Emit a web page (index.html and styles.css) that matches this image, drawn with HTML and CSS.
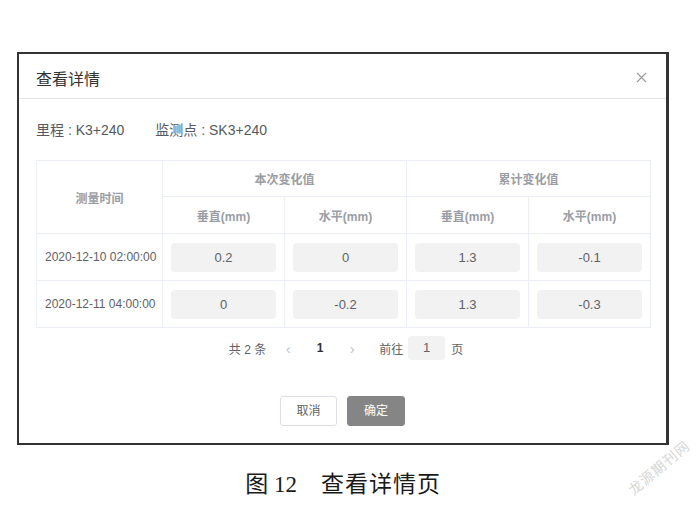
FILE: index.html
```html
<!DOCTYPE html>
<html>
<head>
<title>查看详情</title>
<meta http-equiv="content-type" content="text/html;charset=utf-8" />
<link rel="stylesheet" href="styles.css">
</head>
<body>

<div class="page">

<div class="frame">
	<div class="dlghead">
		<span class="dlgtitle">查看详情</span>
		<svg class="closeicon" width="11" height="11" viewBox="0 0 11 11">
			<path d="M1 1 L10 10 M10 1 L1 10" stroke="#9a9a9a" stroke-width="1.1" fill="none" />
		</svg>
	</div>

	<div class="dlgbody">
		<div class="info">
			<span class="infoitem">里程 : K3+240</span>
			<span class="infoitem">监测点 : SK3+240</span>
		</div>

		<table class="datatable">
			<colgroup>
				<col class="col_time" />
				<col class="col_val" />
				<col class="col_val" />
				<col class="col_val" />
				<col class="col_val" />
			</colgroup>
			<thead>
				<tr class="head1">
					<th rowspan="2">测量时间</th>
					<th colspan="2">本次变化值</th>
					<th colspan="2">累计变化值</th>
				</tr>
				<tr class="head2">
					<th>垂直(mm)</th>
					<th>水平(mm)</th>
					<th>垂直(mm)</th>
					<th>水平(mm)</th>
				</tr>
			</thead>
			<tbody>
				<tr>
					<td class="timecell">2020-12-10 02:00:00</td>
					<td><div class="valbox">0.2</div></td>
					<td><div class="valbox">0</div></td>
					<td><div class="valbox">1.3</div></td>
					<td><div class="valbox">-0.1</div></td>
				</tr>
				<tr>
					<td class="timecell">2020-12-11 04:00:00</td>
					<td><div class="valbox">0</div></td>
					<td><div class="valbox">-0.2</div></td>
					<td><div class="valbox">1.3</div></td>
					<td><div class="valbox">-0.3</div></td>
				</tr>
			</tbody>
		</table>

		<div class="pager">
			<span class="total">共 2 条</span>
			<span class="arrow">&lsaquo;</span>
			<span class="pagenum">1</span>
			<span class="arrow">&rsaquo;</span>
			<span class="jump">前往</span>
			<span class="jumpbox">1</span>
			<span class="jumpunit">页</span>
		</div>

		<div class="buttons">
			<span class="btn btn_cancel">取消</span>
			<span class="btn btn_ok">确定</span>
		</div>
	</div>
</div>

<div class="caption"><span class="capno">图 12</span><span class="captext">查看详情页</span></div>

<div class="watermark">龙源期刊网</div>

</div>

</body>
</html>
```

FILE: styles.css
```css
body {
	margin: 0;
	background-color: #ffffff;
	font-family: "Liberation Sans", "Noto Sans CJK SC", sans-serif;
}
.page {
	position: relative;
	width: 700px;
	height: 508px;
	padding: 52px 0 0 17px;
	box-sizing: border-box;
}
.frame {
	width: 652px;
	box-sizing: border-box;
	border: 2px solid #333333;
	border-right-width: 3px;
	background-color: #ffffff;
}
.dlghead {
	display: flex;
	align-items: center;
	justify-content: space-between;
	height: 44px;
	padding: 0 19px 0 17px;
	border-bottom: 1px solid #e6e6e6;
}
.dlgtitle {
	font-size: 16px;
	color: #333333;
	margin-top: 4px;
}
.closeicon {
	margin-top: 2px;
}
.dlgbody {
	padding: 22px 16px 17px 17px;
}
.info {
	display: flex;
	gap: 31px;
	font-size: 14px;
	line-height: 18px;
	color: #555a60;
}
.datatable {
	margin-top: 21px;
	width: 615px;
	table-layout: fixed;
	border-collapse: collapse;
	border: 1px solid #ebeef5;
}
.col_time {
	width: 126px;
}
.col_val {
	width: 122px;
}
.datatable th, .datatable td {
	border: 1px solid #ebeef5;
	text-align: center;
	padding: 0 8px;
}
.datatable th {
	font-size: 12px;
	font-weight: bold;
	color: #9a9da3;
}
.head1 th {
	height: 35px;
}
.head2 th {
	height: 36px;
}
.datatable td {
	height: 46px;
	font-size: 12px;
	color: #606266;
}
.timecell {
	white-space: nowrap;
}
.valbox {
	height: 29px;
	line-height: 29px;
	border-radius: 4px;
	background-color: #f2f2f2;
	font-size: 13px;
	color: #606266;
}
.pager {
	display: flex;
	align-items: center;
	justify-content: center;
	height: 24px;
	margin-top: 8px;
	padding-left: 6px;
	font-size: 12px;
	color: #606266;
}
.total {
	margin-right: 16px;
}
.arrow {
	font-size: 15px;
	color: #c0c4cc;
	width: 12px;
	text-align: center;
}
.pagenum {
	width: 52px;
	text-align: center;
	font-weight: bold;
	color: #303133;
}
.jump {
	margin-left: 21px;
}
.jumpbox {
	width: 37px;
	height: 24px;
	line-height: 24px;
	margin: 0 6px 0 5px;
	text-align: center;
	background-color: #f2f2f2;
	border-radius: 3px;
	font-size: 13px;
}
.buttons {
	display: flex;
	justify-content: center;
	gap: 10px;
	margin-top: 36px;
	padding-right: 1px;
}
.btn {
	display: inline-block;
	box-sizing: border-box;
	height: 30px;
	line-height: 28px;
	font-size: 12px;
	text-align: center;
	border-radius: 3px;
}
.btn_cancel {
	width: 57px;
	border: 1px solid #dcdfe6;
	color: #606266;
}
.btn_ok {
	width: 58px;
	border: 1px solid #858585;
	background-color: #858585;
	color: #ffffff;
}
.caption {
	margin-top: 25px;
	width: 652px;
	display: flex;
	justify-content: center;
	font-family: "Liberation Serif", "Noto Sans CJK SC", serif;
	font-size: 23px;
	line-height: 30px;
	color: #1a1a1a;
}
.capno {
	margin-right: 24px;
}
.captext {
	letter-spacing: 1px;
}
.watermark {
	position: absolute;
	left: 621px;
	top: 457px;
	font-size: 14px;
	color: #d6d6d6;
	transform: rotate(-40deg);
	letter-spacing: 1px;
}
```
